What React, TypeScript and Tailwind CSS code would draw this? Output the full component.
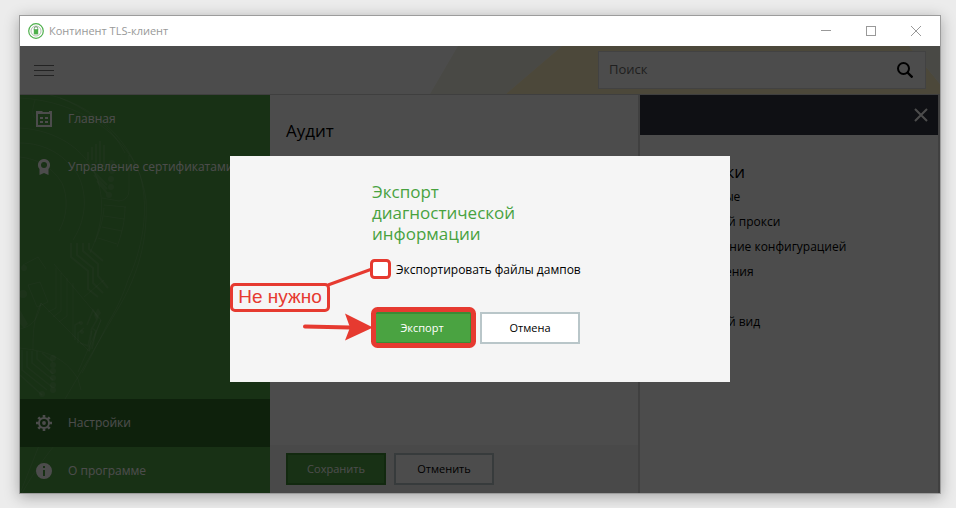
import type { ReactNode } from 'react';

const settings = ['Основные', 'Внешний прокси', 'Управление конфигурацией', 'Обновления', 'Аудит', 'Внешний вид'];

function Logo() {
  return (
    <svg viewBox="0 0 16 16" className="size-4 shrink-0" fill="none" aria-hidden="true">
      <circle cx="8" cy="8" r="7.3" stroke="#4fb04c" strokeWidth="1.2" />
      <circle cx="8" cy="8" r="5" stroke="#8fa58f" strokeWidth="0.7" />
      <path d="M6.3 7V5.400a1.700 1.700 0 0 1 3.400 0V7" stroke="#5c8f5c" strokeWidth="0.9" />
      <rect x="5.8" y="6.2" width="4.4" height="5.2" fill="#4fb04c" />
    </svg>
  );
}

function HomeIcon() {
  return (
    <svg viewBox="0 0 16 16" className="size-4 shrink-0" fill="currentColor" aria-hidden="true">
      <path fillRule="evenodd" d="M0 0h6l1 1h6V0h3v16H0zM2 3v11h12V3z" />
      <path d="M4 6h3v2H4zM9 6h3v2H9zM4 10h3v2H4zM9 10h3v2H9z" />
    </svg>
  );
}

function CertificateIcon() {
  return (
    <svg viewBox="0 0 16 16" className="size-4 shrink-0" fill="currentColor" aria-hidden="true">
      <path fillRule="evenodd" d="M8 0a6 6 0 0 1 4.500 10V16L8 14l-4.500 2v-6A6 6 0 0 1 8 0zm0 3a3 3 0 1 0 0 6 3 3 0 0 0 0-6z" />
    </svg>
  );
}

function GearIcon() {
  return (
    <svg viewBox="0 0 16 16" className="size-4 shrink-0" fill="none" stroke="currentColor" aria-hidden="true">
      <circle cx="8" cy="8" r="5" strokeWidth="2" />
      <circle cx="8" cy="8" r="1.9" fill="currentColor" stroke="none" />
      <path strokeWidth="2.6" d="M8 0v2.6M8 13.4V16M0 8h2.6M13.4 8H16M2.3 2.3l1.9 1.9M11.8 11.8l1.9 1.9M2.3 13.7l1.9-1.9M11.8 4.2l1.9-1.9" />
    </svg>
  );
}

function InfoIcon() {
  return (
    <svg viewBox="0 0 16 16" className="size-4 shrink-0" fill="currentColor" aria-hidden="true">
      <path fillRule="evenodd" d="M8 0a8 8 0 1 1 0 16A8 8 0 0 1 8 0zM7 3v2h2V3zm0 4v6h2V7z" />
    </svg>
  );
}

function CircuitPattern() {
  return (
    <svg viewBox="0 0 250 398" className="pointer-events-none absolute left-0 top-0 h-[398px] w-[250px] text-white/10" fill="none" stroke="currentColor" aria-hidden="true">
      <path d="M0 3C60 6 105 40 120 80c10 35 2 75-12 105-6 18-12 30-20 43-10 20-15 30-26 50" />
      <path d="M30 0c50 12 90 55 96 105 2 40-8 75-27 107L45 304" />
      <path d="M15 5c-3 10-3 14 0 18M40 3c30 12 52 30 65 55M0 33c35 2 65 20 77 50 10 30 2 55-7 75M0 48c25 0 45 12 58 32 10 20 8 45-5 65M0 62c18 2 32 10 42 26 6 14 6 32-3 48" />
      <path d="M84 110l22 2M84 113c-1 12-4 22-9 34M105 112c0 14-3 26-8 40M84 121l20 3M82 132l20 4M78 143l19 6M109 60v35q0 10-10 11l-17-3" />
      <path strokeWidth="2" d="M68 65V57M72 65V52M76 68V49M80 70V46M84 72V50M72 75l15 15M74 80l13 14M77 86l10 12" />
      <path strokeWidth="2" d="M51 148v14l17 14v18l10 8M57 148v12l16 13v15l10 10M63 148v8l15 13v12l10 12M69 148v6l14 12" />
      <path d="M21 208l48 48 3-20M21 208c-8 16-8 32-8 47M21 208c-4 22-14 24-21 26M36 173v40l-8 4M41 178v38l-8 6M47 183v38l-8 6M53 188v54M34 169l47 56-12 32M64 202l20-17M81 225l-23 52" />
      <path d="M0 253c25 3 44 8 58 31l3 11M8 190l9 22 11-5-8-20zM3 170l15-8 8 12" />
      <path strokeWidth="1.5" d="M0 280l22 20M2 255v20l25 20M7 256v16l25 20M12 256v12l21 17M17 256v8l16 15M22 258l11 9M55 245v-15l5-3M58 248v-10l6-5M60 248l8 3 4-18 4 3-4 18M67 230l6-15 5 8-7 12" />
      <path d="M52 332c-20 18-38 45-50 66M24 338L1 396" />
      <g fill="currentColor" stroke="none">
        <circle cx="92" cy="68" r="3" /><circle cx="92" cy="76" r="3" /><circle cx="91" cy="84" r="3" /><circle cx="91" cy="92" r="3" /><circle cx="89" cy="100" r="3" />
        <circle cx="33" cy="263" r="3" /><circle cx="33" cy="270" r="3" /><circle cx="33" cy="276" r="3" /><circle cx="33" cy="283" r="3" /><circle cx="33" cy="290" r="3" /><circle cx="33" cy="295" r="3" /><circle cx="22" cy="299" r="3" />
        <circle cx="61" cy="228" r="2" /><circle cx="62" cy="237" r="2" /><circle cx="4" cy="173" r="3" /><circle cx="3" cy="199" r="4" /><path d="M74 220l4-7 3 5-5 7zM0 215l8 14-4 4-4-4z" />
      </g>
    </svg>
  );
}

function NavItem({ icon, label, active = false }: { icon: ReactNode; label: string; active?: boolean }) {
  return (
    <a
      href="#"
      className={
        active
          ? 'flex h-12 items-center gap-4 whitespace-nowrap bg-[#2f712a] px-4 text-[12px] text-white'
          : 'flex h-12 items-center gap-4 whitespace-nowrap px-4 text-[12px] text-white'
      }
    >
      {icon}
      {label}
    </a>
  );
}

function TitleBar() {
  return (
    <div className="flex h-[30px] items-center bg-white pl-2 pr-px text-[#999]">
      <Logo />
      <h1 className="grow pl-[5px] text-[11px]">Континент TLS-клиент</h1>
      <button type="button" aria-label="Свернуть" className="grid h-[30px] w-[45px] place-items-center">
        <svg viewBox="0 0 10 10" className="size-[10px]" stroke="currentColor" shapeRendering="crispEdges"><path d="M0 4.5h10" /></svg>
      </button>
      <button type="button" aria-label="Развернуть" className="grid h-[30px] w-[45px] place-items-center">
        <span className="size-[10px] border border-current" />
      </button>
      <button type="button" aria-label="Закрыть" className="grid h-[30px] w-[46px] place-items-center">
        <svg viewBox="0 0 10 10" className="size-[10px]" stroke="currentColor"><path d="M0 0l10 10M10 0L0 10" /></svg>
      </button>
    </div>
  );
}

function Header() {
  return (
    <header className="relative flex h-[49px] shrink-0 items-center justify-between overflow-hidden border-b border-[#d2d2d2] bg-white px-3.5">
      <svg viewBox="0 0 512 48" className="absolute right-0 top-0 h-12 w-[512px]" aria-hidden="true">
        <path d="M30 0h104L78 48H2z" fill="#f6f6e6" />
        <path d="M134 0h347l31 38v10H78z" fill="#fdf0c1" />
        <path d="M481 0h31v38z" fill="#f6f6e6" />
      </svg>
      <button type="button" aria-label="Меню" className="relative flex w-5 flex-col gap-1 text-[#777]">
        <span className="h-px bg-current" />
        <span className="h-px bg-current" />
        <span className="h-px bg-current" />
      </button>
      <div className="relative flex h-[38px] w-[328px] items-center border border-[#dcdcdc] bg-white pl-2.5 pr-3">
        <input type="search" aria-label="Поиск" placeholder="Поиск" className="min-w-0 grow bg-transparent text-[13px] outline-none placeholder:text-[#6b6b6b]" />
        <button type="button" aria-label="Найти">
          <svg viewBox="0 0 16 16" className="size-4" fill="none" stroke="#000" aria-hidden="true">
            <circle cx="6.5" cy="6.5" r="5.5" strokeWidth="2" />
            <path d="M10.5 10.5l5 5" strokeWidth="2.4" />
          </svg>
        </button>
      </div>
    </header>
  );
}

function Callouts() {
  return (
    <div className="pointer-events-none absolute inset-0">
      <svg viewBox="0 0 500 226" className="absolute left-0 top-0 h-[226px] w-[500px]" fill="none" stroke="#e63a30" strokeWidth="3" aria-hidden="true">
        <path d="M98 129l44-16" />
        <rect x="141.5" y="104.5" width="18" height="17" rx="3" />
        <path d="M75 170.5l45 1" strokeWidth="4" strokeLinecap="round" />
        <path d="M143 171.5l-28-14 5 14-5 13z" fill="#e63a30" stroke="none" />
        <rect x="143.5" y="153.5" width="100" height="36" rx="4" strokeWidth="5" />
      </svg>
      <span className="absolute left-0 top-[127px] flex h-[29px] w-[100px] items-center justify-center rounded-[5px] border-3 border-[#e63a30] font-['Liberation_Sans',sans-serif] text-[19px] text-[#e63a30]">
        Не нужно
      </span>
    </div>
  );
}

function ExportDialog() {
  return (
    <div className="absolute inset-0 flex items-center justify-center bg-black/70 pb-px">
      <div role="dialog" aria-modal="true" aria-labelledby="export-title" className="relative h-[226px] w-[500px] bg-[#f5f5f5] px-[142px] pt-[25px]">
        <h2 id="export-title" className="w-[160px] text-[17px] leading-[21px] text-[#48a23f]">
          Экспорт диагностической информации
        </h2>
        <label className="mt-4 flex h-5 items-center gap-2 whitespace-nowrap text-[12px] text-black">
          <input type="checkbox" className="size-4 shrink-0 appearance-none bg-white" />
          Экспортировать файлы дампов
        </label>
        <div className="mt-8 flex w-[208px] justify-end gap-2">
          <button type="button" className="h-8 w-[100px] shrink-0 border-2 border-[#3c8a35] bg-[#4aa341] text-[11px] leading-5 text-white">Экспорт</button>
          <button type="button" className="h-8 w-[100px] shrink-0 border-2 border-[#b9c6c9] bg-white text-[11px] leading-5 text-black">Отмена</button>
        </div>
        <Callouts />
      </div>
    </div>
  );
}

export default function App() {
  return (
    <div className="flex h-screen bg-[#ececec] pb-3.5 pl-[19px] pr-[15px] pt-[15px] font-['Open_Sans','Noto_Sans',sans-serif]">
      <div className="flex min-w-0 grow flex-col border border-[#9c9c9c] bg-white shadow-[0_3px_14px_rgba(0,0,0,0.3)]">
        <TitleBar />
        <div className="relative flex min-h-0 grow flex-col overflow-hidden">
          <Header />
          <div className="flex min-h-0 grow">
            <nav className="relative -mb-0.5 flex w-[250px] shrink-0 flex-col bg-[#50a346]">
              <CircuitPattern />
              <div className="relative grow">
                <NavItem icon={<HomeIcon />} label="Главная" />
                <NavItem icon={<CertificateIcon />} label="Управление сертификатами" />
              </div>
              <div className="relative">
                <NavItem icon={<GearIcon />} label="Настройки" active />
                <NavItem icon={<InfoIcon />} label="О программе" />
              </div>
            </nav>
            <main className="flex min-w-0 grow flex-col bg-white">
              <h2 className="grow px-4 pt-6 text-[17px] leading-6 text-black">Аудит</h2>
              <div className="flex h-12 items-center gap-2 bg-[#f5f5f5] px-4">
                <button type="button" className="h-8 w-[100px] border-2 border-[#3c8a35] bg-[#50a346] text-[11px] leading-5 text-white">Сохранить</button>
                <button type="button" className="h-8 w-[100px] border-2 border-[#b9c6c9] bg-white text-[11px] leading-5 text-black">Отменить</button>
              </div>
            </main>
            <aside className="flex w-[302px] shrink-0 flex-col border-x-2 border-[#d8d8d8] bg-white">
              <div className="flex h-10 items-center justify-end bg-[#343843] px-2.5">
                <button type="button" aria-label="Закрыть панель">
                  <svg viewBox="0 0 14 14" className="size-3.5" stroke="#fff" strokeWidth="2" aria-hidden="true"><path d="M1 1l12 12M13 1L1 13" /></svg>
                </button>
              </div>
              <h2 className="px-4 pt-[25px] text-[17px] leading-6 text-black">Настройки</h2>
              <ul className="pl-10 text-[12px] leading-[25px] text-black">
                {settings.map((item) => (
                  <li key={item}><a href="#">{item}</a></li>
                ))}
              </ul>
            </aside>
          </div>
          <ExportDialog />
        </div>
      </div>
    </div>
  );
}
